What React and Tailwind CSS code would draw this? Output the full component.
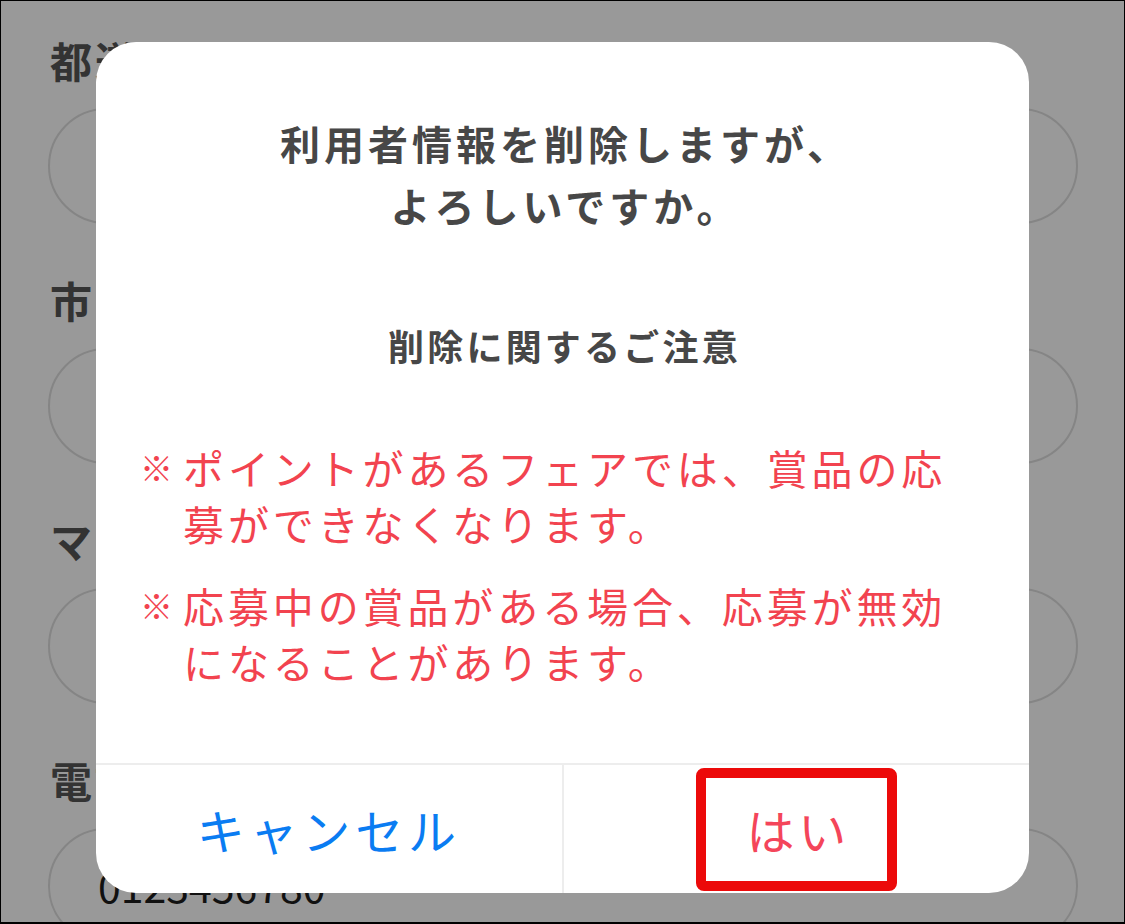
// Delete-user confirm dialog over the dimmed profile form
const fields = [
  { label: '都道府県' },
  { label: '市区町村' },
  { label: 'マンション名' },
  { label: '電話番号', value: '0123456780' },
]

const notes = [
  ['ポイントがあるフェアでは、賞品の応', '募ができなくなります。'],
  ['応募中の賞品がある場合、応募が無効', 'になることがあります。'],
]

export default function App() {
  return (
    <div className="relative w-[1125px] h-[924px] overflow-hidden bg-[#999999] border border-black border-b-2 font-['Noto_Sans_CJK_JP','Noto_Sans',sans-serif]">
      {/* Background form (dimmed) */}
      <div className="flex flex-col px-[47px] pt-[35px]">
        {fields.map(({ label, value }) => (
          <div key={label} className="flex flex-col mb-[52px]">
            <p className="text-[42px] leading-[48px] font-bold tracking-[0.07em] text-[#333333] pl-[2px]">{label}</p>
            <div className="mt-[24px] h-[116px] w-[1030px] rounded-full border-2 border-[#858585] flex items-center pl-[48px]">
              {value && <span className="text-[41px] text-[#111111]">{value}</span>}
            </div>
          </div>
        ))}
      </div>

      {/* Dialog */}
      <div className="absolute left-[95px] top-[41px] w-[933px] bg-white rounded-[40px] overflow-hidden flex flex-col">
        <h2 className="pt-[70px] pl-[6px] text-center text-[40px] leading-[62px] font-bold tracking-[0.1em] text-[#474747]">
          利用者情報を削除しますが、
          <br />
          よろしいですか。
        </h2>
        <p className="mt-[84px] pl-[4px] text-center text-[36px] leading-[50px] font-bold tracking-[0.09em] text-[#474747]">
          削除に関するご注意
        </p>
        <div className="mt-[69px] mb-[74px] flex flex-col gap-[26px] pl-[44px]">
          {notes.map(([a, b]) => (
            <div key={a} className="flex text-[#f2434f]">
              <span className="w-[43px] shrink-0 text-[33px] leading-[56px] font-bold">※</span>
              <p className="text-[41px] leading-[56px] tracking-[0.095em]">
                {a}
                <br />
                {b}
              </p>
            </div>
          ))}
        </div>
        {/* Buttons */}
        <div className="flex h-[130px] border-t-2 border-[#ededed]">
          <button className="flex-1 flex items-center justify-center text-[48px] tracking-[0.1em] text-[#0a7cf2]">
            キャンセル
          </button>
          <div className="w-[2px] bg-[#ededed]" />
          <button className="flex-1 flex items-center justify-center">
            <span className="flex items-center justify-center w-[201px] h-[123px] border-[10px] border-[#ec0a0a] rounded-[8px] text-[48px] tracking-[0.08em] text-[#f4455a] pl-[4px]">
              はい
            </span>
          </button>
        </div>
      </div>
    </div>
  )
}
